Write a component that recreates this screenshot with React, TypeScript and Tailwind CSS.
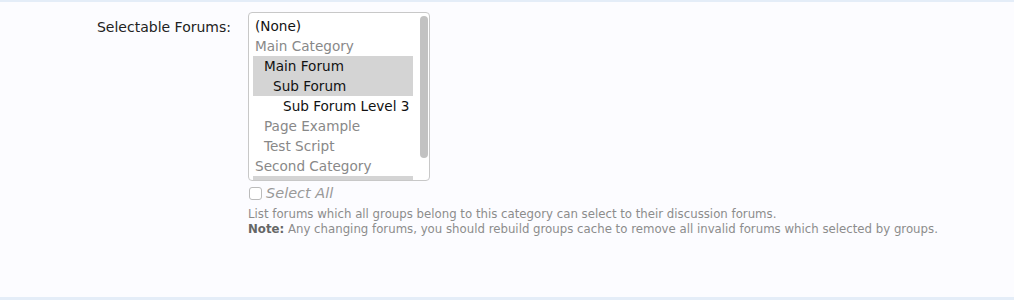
import { useState } from 'react'

type ForumOption = {
  label: string
  depth: number
  category?: boolean
  selected?: boolean
}

const options: ForumOption[] = [
  { label: '(None)', depth: 0 },
  { label: 'Main Category', depth: 0, category: true },
  { label: 'Main Forum', depth: 1, selected: true },
  { label: 'Sub Forum', depth: 2, selected: true },
  { label: 'Sub Forum Level 3', depth: 3 },
  { label: 'Page Example', depth: 1, category: true },
  { label: 'Test Script', depth: 1, category: true },
  { label: 'Second Category', depth: 0, category: true },
  { label: 'Hidden Forum', depth: 1, selected: true },
]

const indent = ['pl-[2px]', 'pl-[11px]', 'pl-[20px]', 'pl-[30px]']

export default function App() {
  const [selectAll, setSelectAll] = useState(false)

  return (
    <div className="h-[300px] w-full bg-[#fcfcff] font-['DejaVu_Sans',sans-serif]">
      <div className="h-[2px] bg-[#e4edf8]" />

      <div className="flex h-[295px] pt-[10px]">
        {/* Label column */}
        <div className="w-[231px] shrink-0 pt-[5px] text-right text-[14px] text-[#222]">
          Selectable Forums:
        </div>

        {/* Control column */}
        <div className="ml-[17px] flex flex-col">
          <div className="relative h-[169px] w-[182px] overflow-hidden rounded-[4px] border border-[#c8c8c8] bg-white pt-[3px] pl-[4px] text-[13.6px] leading-[20px]">
            {options.map((opt) => (
              <div
                key={opt.label}
                className={`w-[160px] whitespace-nowrap ${indent[opt.depth]} ${
                  opt.selected ? 'bg-[#d4d4d4]' : ''
                } ${opt.category ? 'text-[#888]' : 'text-[#111]'}`}
              >
                {opt.label}
              </div>
            ))}
            {/* Scrollbar */}
            <div className="absolute top-[3px] right-[1px] h-[142px] w-[8px] rounded-full bg-[#c2c2c2]" />
          </div>

          <label className="mt-[2px] flex items-center gap-[4px] text-[14.5px] leading-[20px] italic text-[#999]">
            <input
              type="checkbox"
              checked={selectAll}
              onChange={(e) => setSelectAll(e.target.checked)}
              className="ml-[1px] h-[13px] w-[13px] appearance-none rounded-[3px] border border-[#bbb] bg-white"
            />
            Select All
          </label>

          <div className="mt-[4px] text-[11.75px] leading-[15px] text-[#8c8c8c]">
            <p>List forums which all groups belong to this category can select to their discussion forums.</p>
            <p>
              <span className="font-bold text-[#666]">Note:</span> Any changing forums, you should rebuild groups cache to remove all invalid forums which selected by groups.
            </p>
          </div>
        </div>
      </div>

      <div className="h-[3px] bg-[#e4edf8]" />
    </div>
  )
}
